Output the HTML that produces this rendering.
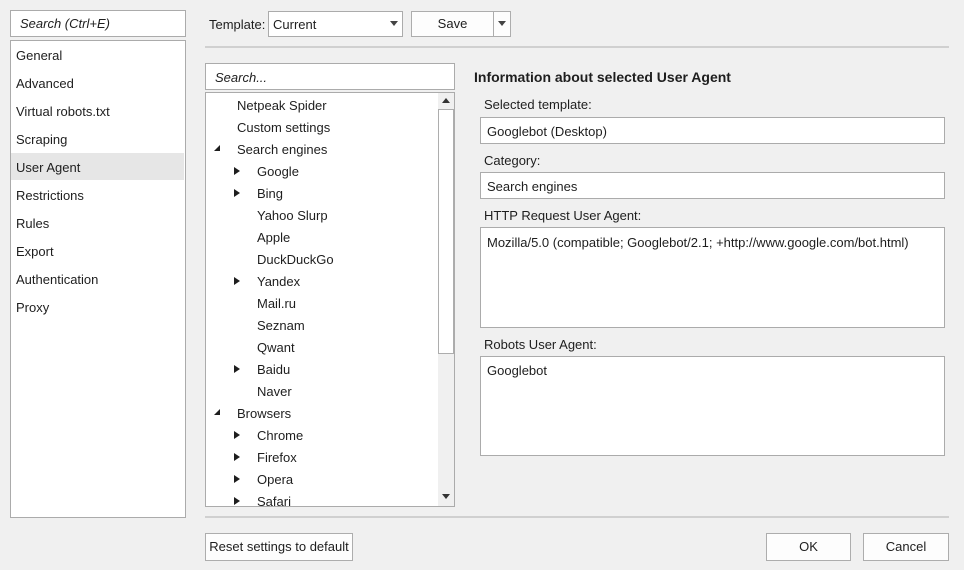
<!DOCTYPE html>
<html><head><style>
*{box-sizing:border-box;margin:0;padding:0}
body{width:964px;height:570px;background:#f0f0f0;font-family:"Liberation Sans",sans-serif;font-size:13px;color:#1e1e1e;position:relative;overflow:hidden}
.a{position:absolute}
.box{position:absolute;background:#fff;border:1px solid #ababab}
.t{position:absolute;white-space:nowrap}
.btn{position:absolute;background:#fdfdfd;border:1px solid #adadad;text-align:center;line-height:26px}
.tri{position:absolute;width:0;height:0;border-top:4px solid transparent;border-bottom:4px solid transparent;border-left:6px solid #1e1e1e}
.tri2{position:absolute;width:0;height:0;border-left:6px solid transparent;border-bottom:6px solid #1e1e1e}
.dd{position:absolute;width:0;height:0;border-left:4px solid transparent;border-right:4px solid transparent;border-top:5px solid #444}
</style></head><body>
<div class="box" style="left:10px;top:10px;width:176px;height:27px"></div>
<div class="t" style="left:20px;top:16px;font-style:italic">Search (Ctrl+E)</div>
<div class="box" style="left:10px;top:40px;width:176px;height:478px"></div>
<div class="a" style="left:11px;top:153px;width:173px;height:27px;background:#e6e6e6"></div>
<div class="t" style="left:16px;top:48px">General</div>
<div class="t" style="left:16px;top:76px">Advanced</div>
<div class="t" style="left:16px;top:104px">Virtual robots.txt</div>
<div class="t" style="left:16px;top:132px">Scraping</div>
<div class="t" style="left:16px;top:160px">User Agent</div>
<div class="t" style="left:16px;top:188px">Restrictions</div>
<div class="t" style="left:16px;top:216px">Rules</div>
<div class="t" style="left:16px;top:244px">Export</div>
<div class="t" style="left:16px;top:272px">Authentication</div>
<div class="t" style="left:16px;top:300px">Proxy</div>

<div class="t" style="left:209px;top:17px">Template:</div>
<div class="box" style="left:268px;top:11px;width:135px;height:26px"></div>
<div class="t" style="left:273px;top:17px">Current</div>
<div class="dd" style="left:390px;top:21px"></div>
<div class="btn" style="left:411px;top:11px;width:100px;height:26px;line-height:24px;padding-right:17px">Save</div>
<div class="a" style="left:493px;top:12px;width:1px;height:24px;background:#adadad"></div>
<div class="dd" style="left:498px;top:21px"></div>

<div class="a" style="left:205px;top:46px;width:744px;height:2px;background:#d0d0d0"></div>

<div class="box" style="left:205px;top:63px;width:250px;height:27px"></div>
<div class="t" style="left:215px;top:70px;font-style:italic">Search...</div>
<div class="box" style="left:205px;top:92px;width:250px;height:415px"></div>
<div class="a" style="left:438px;top:93px;width:16px;height:413px;background:#f0f0f0"></div>
<div class="a" style="left:438px;top:109px;width:16px;height:245px;background:#fff;border:1px solid #adadad"></div>
<div class="a" style="left:442px;top:98px;border-left:4px solid transparent;border-right:4px solid transparent;border-bottom:5px solid #333"></div>
<div class="a" style="left:442px;top:494px;border-left:4px solid transparent;border-right:4px solid transparent;border-top:5px solid #333"></div>
<div class="a" style="left:206px;top:93px;width:232px;height:413px;overflow:hidden">
<div class="t" style="left:31px;top:5px">Netpeak Spider</div>
<div class="t" style="left:31px;top:27px">Custom settings</div>
<div class="tri2" style="left:8px;top:52px"></div><div class="t" style="left:31px;top:49px">Search engines</div>
<div class="tri" style="left:28px;top:74px"></div><div class="t" style="left:51px;top:71px">Google</div>
<div class="tri" style="left:28px;top:96px"></div><div class="t" style="left:51px;top:93px">Bing</div>
<div class="t" style="left:51px;top:115px">Yahoo Slurp</div>
<div class="t" style="left:51px;top:137px">Apple</div>
<div class="t" style="left:51px;top:159px">DuckDuckGo</div>
<div class="tri" style="left:28px;top:184px"></div><div class="t" style="left:51px;top:181px">Yandex</div>
<div class="t" style="left:51px;top:203px">Mail.ru</div>
<div class="t" style="left:51px;top:225px">Seznam</div>
<div class="t" style="left:51px;top:247px">Qwant</div>
<div class="tri" style="left:28px;top:272px"></div><div class="t" style="left:51px;top:269px">Baidu</div>
<div class="t" style="left:51px;top:291px">Naver</div>
<div class="tri2" style="left:8px;top:316px"></div><div class="t" style="left:31px;top:313px">Browsers</div>
<div class="tri" style="left:28px;top:338px"></div><div class="t" style="left:51px;top:335px">Chrome</div>
<div class="tri" style="left:28px;top:360px"></div><div class="t" style="left:51px;top:357px">Firefox</div>
<div class="tri" style="left:28px;top:382px"></div><div class="t" style="left:51px;top:379px">Opera</div>
<div class="tri" style="left:28px;top:404px"></div><div class="t" style="left:51px;top:401px">Safari</div>
</div>

<div class="t" style="left:474px;top:69px;font-weight:bold;font-size:14px">Information about selected User Agent</div>
<div class="t" style="left:484px;top:97px">Selected template:</div>
<div class="box" style="left:480px;top:117px;width:465px;height:27px"></div>
<div class="t" style="left:487px;top:124px">Googlebot (Desktop)</div>
<div class="t" style="left:484px;top:153px">Category:</div>
<div class="box" style="left:480px;top:172px;width:465px;height:27px"></div>
<div class="t" style="left:487px;top:179px">Search engines</div>
<div class="t" style="left:484px;top:208px">HTTP Request User Agent:</div>
<div class="box" style="left:480px;top:227px;width:465px;height:101px"></div>
<div class="t" style="left:487px;top:235px">Mozilla/5.0 (compatible; Googlebot/2.1; +http://www.google.com/bot.html)</div>
<div class="t" style="left:484px;top:337px">Robots User Agent:</div>
<div class="box" style="left:480px;top:356px;width:465px;height:100px"></div>
<div class="t" style="left:487px;top:363px">Googlebot</div>

<div class="a" style="left:205px;top:516px;width:744px;height:2px;background:#d0d0d0"></div>
<div class="btn" style="left:205px;top:533px;width:148px;height:28px">Reset settings to default</div>
<div class="btn" style="left:766px;top:533px;width:85px;height:28px">OK</div>
<div class="btn" style="left:863px;top:533px;width:86px;height:28px">Cancel</div>
</body></html>
